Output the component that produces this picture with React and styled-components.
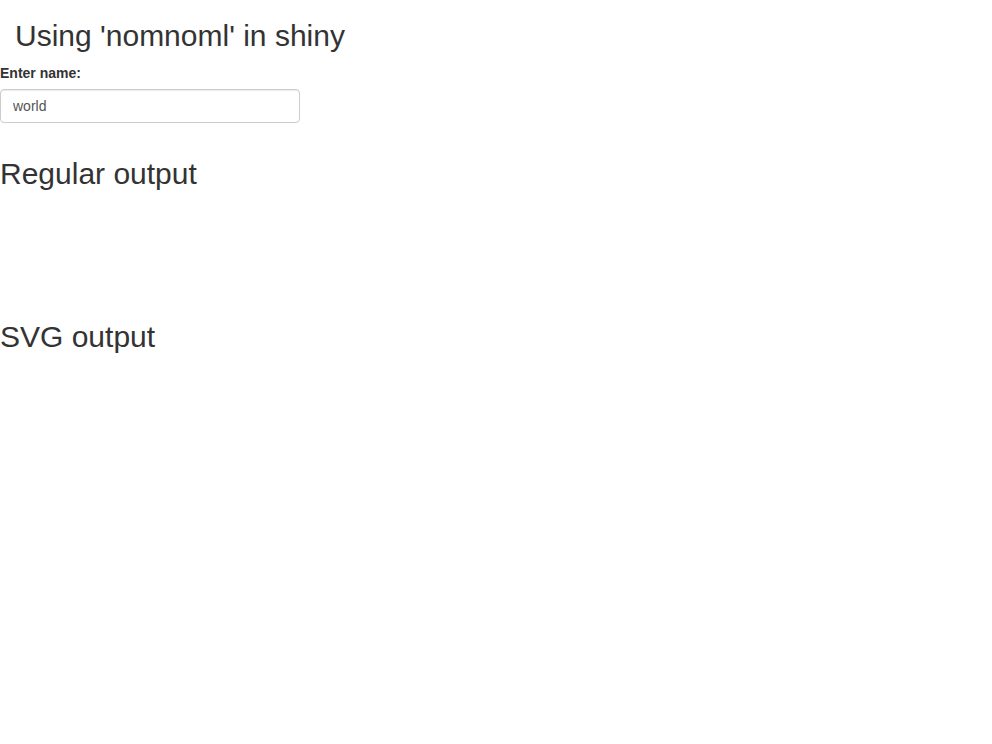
import React from "react";
import styled, { createGlobalStyle } from "styled-components";

const GlobalStyle = createGlobalStyle`
  * {
    box-sizing: border-box;
  }
  body {
    margin: 0;
    background: #fff;
    color: #333;
    font-family: "Liberation Sans", Arial, sans-serif;
    font-size: 14px;
    line-height: 1.42857;
  }
`;

const Page = styled.div`
  display: flex;
  flex-direction: column;
  align-items: flex-start;
`;

const TitlePanel = styled.div`
  padding: 0 15px 2px;
`;

const Heading = styled.h2`
  margin: ${(props) => (props.$top ? "19px 0 10px" : "20px 0 10px")};
  font-size: 30px;
  font-weight: 500;
  line-height: 1.1;
  color: #333;
`;

const FormGroup = styled.div`
  width: 300px;
  margin-bottom: 14px;
`;

const Label = styled.label`
  display: inline-block;
  margin-bottom: 5px;
  font-weight: 700;
`;

const TextInput = styled.input`
  display: block;
  width: 100%;
  height: 34px;
  padding: 6px 12px;
  font-family: inherit;
  font-size: 14px;
  line-height: 1.42857;
  color: #555;
  background: #fff;
  border: 1px solid #ccc;
  border-radius: 4px;
  box-shadow: inset 0 1px 1px rgba(0, 0, 0, 0.075);
  outline: none;
`;

const Output = styled.div`
  align-self: stretch;
  height: ${(props) => props.height}px;
`;

export default function App() {
  return (
    <Page>
      <GlobalStyle />
      <TitlePanel>
        <Heading $top>Using 'nomnoml' in shiny</Heading>
      </TitlePanel>
      <FormGroup>
        <Label htmlFor="name">Enter name:</Label>
        <TextInput id="name" type="text" defaultValue="world" />
      </FormGroup>
      <Heading>Regular output</Heading>
      <Output height={100} />
      <Heading>SVG output</Heading>
      <Output height={400} />
    </Page>
  );
}
